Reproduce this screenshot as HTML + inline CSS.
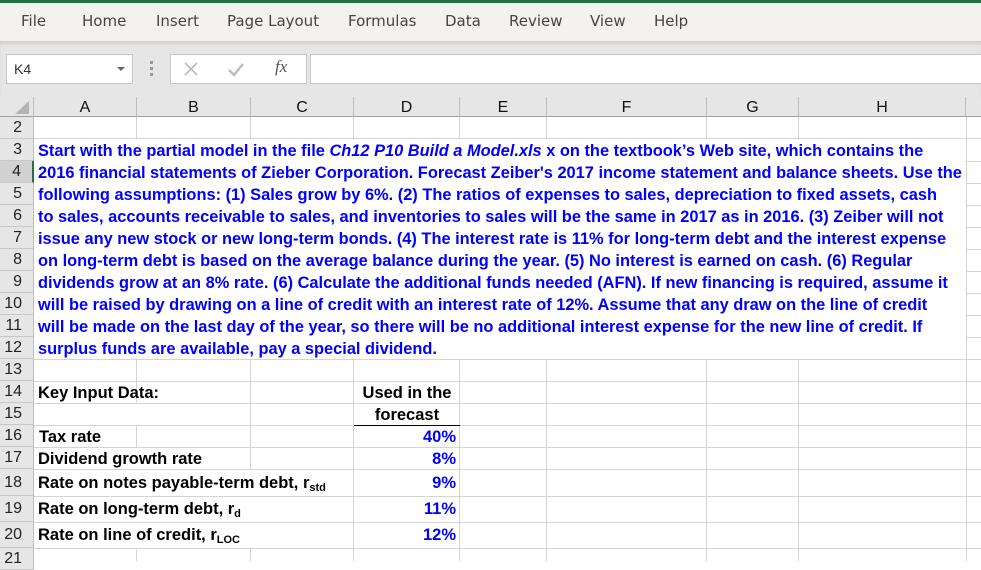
<!DOCTYPE html>
<html><head><meta charset="utf-8"><style>
*{margin:0;padding:0;box-sizing:border-box}
body{width:981px;height:561px;overflow:hidden;background:#fff;font-family:"Liberation Sans",Arial,sans-serif;position:relative}
.a{position:absolute}
.tab{position:absolute;top:12px;color:#444;font-family:"DejaVu Sans","Liberation Sans",sans-serif;font-size:15px}
.vl{position:absolute;width:1px;background:#d4d4d4}
.hl{position:absolute;height:1px;background:#d4d4d4}
.rh{position:absolute;left:0;width:34px;background:#e6e6e6;border-bottom:1px solid #c8c8c8;border-right:1px solid #bdbdbd;font-size:16px;color:#222;text-align:right;padding-right:11px;font-family:"Liberation Sans",sans-serif}
.ch{position:absolute;top:97px;height:20px;background:#e6e6e6;border-right:1px solid #bdbdbd;border-bottom:1px solid #a0a0a0;font-size:16px;text-align:center;line-height:21px;color:#111}
.ln{position:absolute;left:38px;font-size:16.4px;font-weight:bold;color:#0000ff;white-space:nowrap;line-height:22px}
.k{position:absolute;left:38px;font-size:16.5px;font-weight:bold;color:#000;white-space:nowrap}
.v{position:absolute;right:525px;font-size:16.5px;font-weight:bold;color:#0000ff;text-align:right}
sub{font-size:11px;vertical-align:-3px}
</style></head><body>
<div class="a" style="left:0;top:0;width:981px;height:3px;background:#217346"></div>
<div class="a" style="left:0;top:3px;width:981px;height:38px;background:#f3f2f1"></div>
<div class="a" style="left:0;top:41px;width:981px;height:56px;background:#e6e6e6;box-shadow:inset 0 4px 4px -2px #c8c8c8"></div>
<span class="tab" style="left:21px">File</span>
<span class="tab" style="left:82px">Home</span>
<span class="tab" style="left:156px">Insert</span>
<span class="tab" style="left:227px">Page Layout</span>
<span class="tab" style="left:348px">Formulas</span>
<span class="tab" style="left:445px">Data</span>
<span class="tab" style="left:509px">Review</span>
<span class="tab" style="left:590px">View</span>
<span class="tab" style="left:654px">Help</span>
<div class="a" style="left:6px;top:54px;width:127px;height:30px;background:#fff;border:1px solid #c6c6c6;font-size:14px;line-height:28px;padding-left:7px;color:#333">K4<span class="a" style="right:7px;top:12px;width:0;height:0;border-left:4px solid transparent;border-right:4px solid transparent;border-top:4px solid #666"></span></div>
<div class="a" style="left:150px;top:61px;width:3px;height:3px;background:#999;box-shadow:0 6px 0 #999,0 12px 0 #999"></div>
<div class="a" style="left:170px;top:54px;width:137px;height:30px;background:#fff;border:1px solid #c6c6c6"></div>
<svg class="a" style="left:183px;top:61px" width="16" height="16"><path d="M2 2L14 14M14 2L2 14" stroke="#bbb" stroke-width="1.6"/></svg>
<svg class="a" style="left:227px;top:61px" width="18" height="16"><path d="M2 9L7 14L16 3" stroke="#bbb" stroke-width="2.4" fill="none"/></svg>
<span class="a" style="left:275px;top:57px;font-family:'Liberation Serif',serif;font-style:italic;font-size:17px;color:#555">fx</span>
<div class="a" style="left:310px;top:54px;width:680px;height:30px;background:#fff;border:1px solid #c6c6c6"></div>

<div class="a" style="left:0;top:97px;width:34px;height:20px;background:#e6e6e6;border-right:1px solid #bdbdbd;border-bottom:1px solid #a0a0a0"></div>
<div class="a" style="left:15px;top:101px;width:0;height:0;border-left:14px solid transparent;border-bottom:13px solid #b4b4b4"></div>
<div class="ch" style="left:34px;width:103px">A</div>
<div class="ch" style="left:137px;width:114px">B</div>
<div class="ch" style="left:251px;width:103px">C</div>
<div class="ch" style="left:354px;width:106px">D</div>
<div class="ch" style="left:460px;width:87px">E</div>
<div class="ch" style="left:547px;width:160px">F</div>
<div class="ch" style="left:707px;width:92px">G</div>
<div class="ch" style="left:799px;width:167px">H</div>
<div class="ch" style="left:966px;width:20px"></div>

<div class="rh" style="top:117px;height:22px;line-height:22px">2</div>
<div class="rh" style="top:139px;height:22px;line-height:22px">3</div>
<div class="rh" style="top:161px;height:22px;line-height:22px;background:#d2d2d2;border-right:2px solid #217346">4</div>
<div class="rh" style="top:183px;height:22px;line-height:22px">5</div>
<div class="rh" style="top:205px;height:22px;line-height:22px">6</div>
<div class="rh" style="top:227px;height:22px;line-height:22px">7</div>
<div class="rh" style="top:249px;height:22px;line-height:22px">8</div>
<div class="rh" style="top:271px;height:22px;line-height:22px">9</div>
<div class="rh" style="top:293px;height:22px;line-height:22px">10</div>
<div class="rh" style="top:315px;height:22px;line-height:22px">11</div>
<div class="rh" style="top:337px;height:22px;line-height:22px">12</div>
<div class="rh" style="top:359px;height:22px;line-height:22px">13</div>
<div class="rh" style="top:381px;height:22px;line-height:22px">14</div>
<div class="rh" style="top:403px;height:22px;line-height:22px">15</div>
<div class="rh" style="top:425px;height:22px;line-height:22px">16</div>
<div class="rh" style="top:447px;height:22px;line-height:22px">17</div>
<div class="rh" style="top:469px;height:27px;line-height:27px">18</div>
<div class="rh" style="top:496px;height:26px;line-height:26px">19</div>
<div class="rh" style="top:522px;height:26px;line-height:26px">20</div>
<div class="rh" style="top:548px;height:22px;line-height:22px">21</div>

<div class="hl" style="left:34px;top:138px;width:947px"></div>
<div class="hl" style="left:34px;top:359px;width:947px"></div>
<div class="hl" style="left:34px;top:381px;width:947px"></div>
<div class="hl" style="left:34px;top:403px;width:947px"></div>
<div class="hl" style="left:34px;top:425px;width:947px"></div>
<div class="hl" style="left:34px;top:447px;width:947px"></div>
<div class="hl" style="left:34px;top:469px;width:947px"></div>
<div class="hl" style="left:34px;top:496px;width:947px"></div>
<div class="hl" style="left:34px;top:522px;width:947px"></div>
<div class="hl" style="left:34px;top:548px;width:947px"></div>
<div class="hl" style="left:966px;top:161px;width:15px"></div>
<div class="hl" style="left:966px;top:183px;width:15px"></div>
<div class="hl" style="left:966px;top:205px;width:15px"></div>
<div class="hl" style="left:966px;top:227px;width:15px"></div>
<div class="hl" style="left:966px;top:249px;width:15px"></div>
<div class="hl" style="left:966px;top:271px;width:15px"></div>
<div class="hl" style="left:966px;top:293px;width:15px"></div>
<div class="hl" style="left:966px;top:315px;width:15px"></div>
<div class="hl" style="left:966px;top:337px;width:15px"></div>
<div class="vl" style="left:136px;top:117px;height:22px"></div>
<div class="vl" style="left:250px;top:117px;height:22px"></div>
<div class="vl" style="left:353px;top:117px;height:22px"></div>
<div class="vl" style="left:459px;top:117px;height:22px"></div>
<div class="vl" style="left:546px;top:117px;height:22px"></div>
<div class="vl" style="left:706px;top:117px;height:22px"></div>
<div class="vl" style="left:798px;top:117px;height:22px"></div>
<div class="vl" style="left:966px;top:117px;height:444px"></div>
<div class="vl" style="left:136px;top:359px;height:44px"></div>
<div class="vl" style="left:136px;top:425px;height:22px"></div>
<div class="vl" style="left:136px;top:548px;height:13px"></div>
<div class="vl" style="left:250px;top:359px;height:110px"></div>
<div class="vl" style="left:250px;top:548px;height:13px"></div>
<div class="vl" style="left:353px;top:359px;height:202px"></div>
<div class="vl" style="left:459px;top:359px;height:202px"></div>
<div class="vl" style="left:546px;top:359px;height:202px"></div>
<div class="vl" style="left:706px;top:359px;height:202px"></div>
<div class="vl" style="left:798px;top:359px;height:202px"></div>
<div class="a" style="left:35px;top:139px;width:931px;height:220px;background:#fff"></div>
<div class="ln" style="top:140px">Start with the partial model in the file <i>Ch12 P10 Build a Model.xls</i> x on the textbook’s Web site, which contains the</div>
<div class="ln" style="top:162px">2016 financial statements of Zieber Corporation. Forecast Zeiber's 2017 income statement and balance sheets. Use the</div>
<div class="ln" style="top:184px">following assumptions: (1) Sales grow by 6%. (2) The ratios of expenses to sales, depreciation to fixed assets, cash</div>
<div class="ln" style="top:206px">to sales, accounts receivable to sales, and inventories to sales will be the same in 2017 as in 2016. (3) Zeiber will not</div>
<div class="ln" style="top:228px">issue any new stock or new long-term bonds. (4) The interest rate is 11% for long-term debt and the interest expense</div>
<div class="ln" style="top:250px">on long-term debt is based on the average balance during the year. (5) No interest is earned on cash. (6) Regular</div>
<div class="ln" style="top:272px">dividends grow at an 8% rate. (6) Calculate the additional funds needed (AFN). If new financing is required, assume it</div>
<div class="ln" style="top:294px">will be raised by drawing on a line of credit with an interest rate of 12%. Assume that any draw on the line of credit</div>
<div class="ln" style="top:316px">will be made on the last day of the year, so there will be no additional interest expense for the new line of credit. If</div>
<div class="ln" style="top:338px">surplus funds are available, pay a special dividend.</div>

<div class="k" style="top:384px">Key Input Data:</div>
<div class="a" style="left:354px;top:384px;width:106px;text-align:center;font-size:16.5px;font-weight:bold">Used in the</div>
<div class="a" style="left:354px;top:406px;width:106px;text-align:center;font-size:16.5px;font-weight:bold">forecast</div>
<div class="a" style="left:354px;top:425px;width:106px;height:1px;background:#000"></div>
<div class="k" style="top:428px;left:39px">Tax rate</div>
<div class="k" style="top:450px">Dividend growth rate</div>
<div class="k" style="top:474px">Rate on notes payable-term debt, r<sub>std</sub></div>
<div class="k" style="top:500px">Rate on long-term debt, r<sub>d</sub></div>
<div class="k" style="top:526px">Rate on line of credit, r<sub>LOC</sub></div>
<div class="v" style="top:428px">40%</div>
<div class="v" style="top:450px">8%</div>
<div class="v" style="top:474px">9%</div>
<div class="v" style="top:500px">11%</div>
<div class="v" style="top:526px">12%</div>
</body></html>
